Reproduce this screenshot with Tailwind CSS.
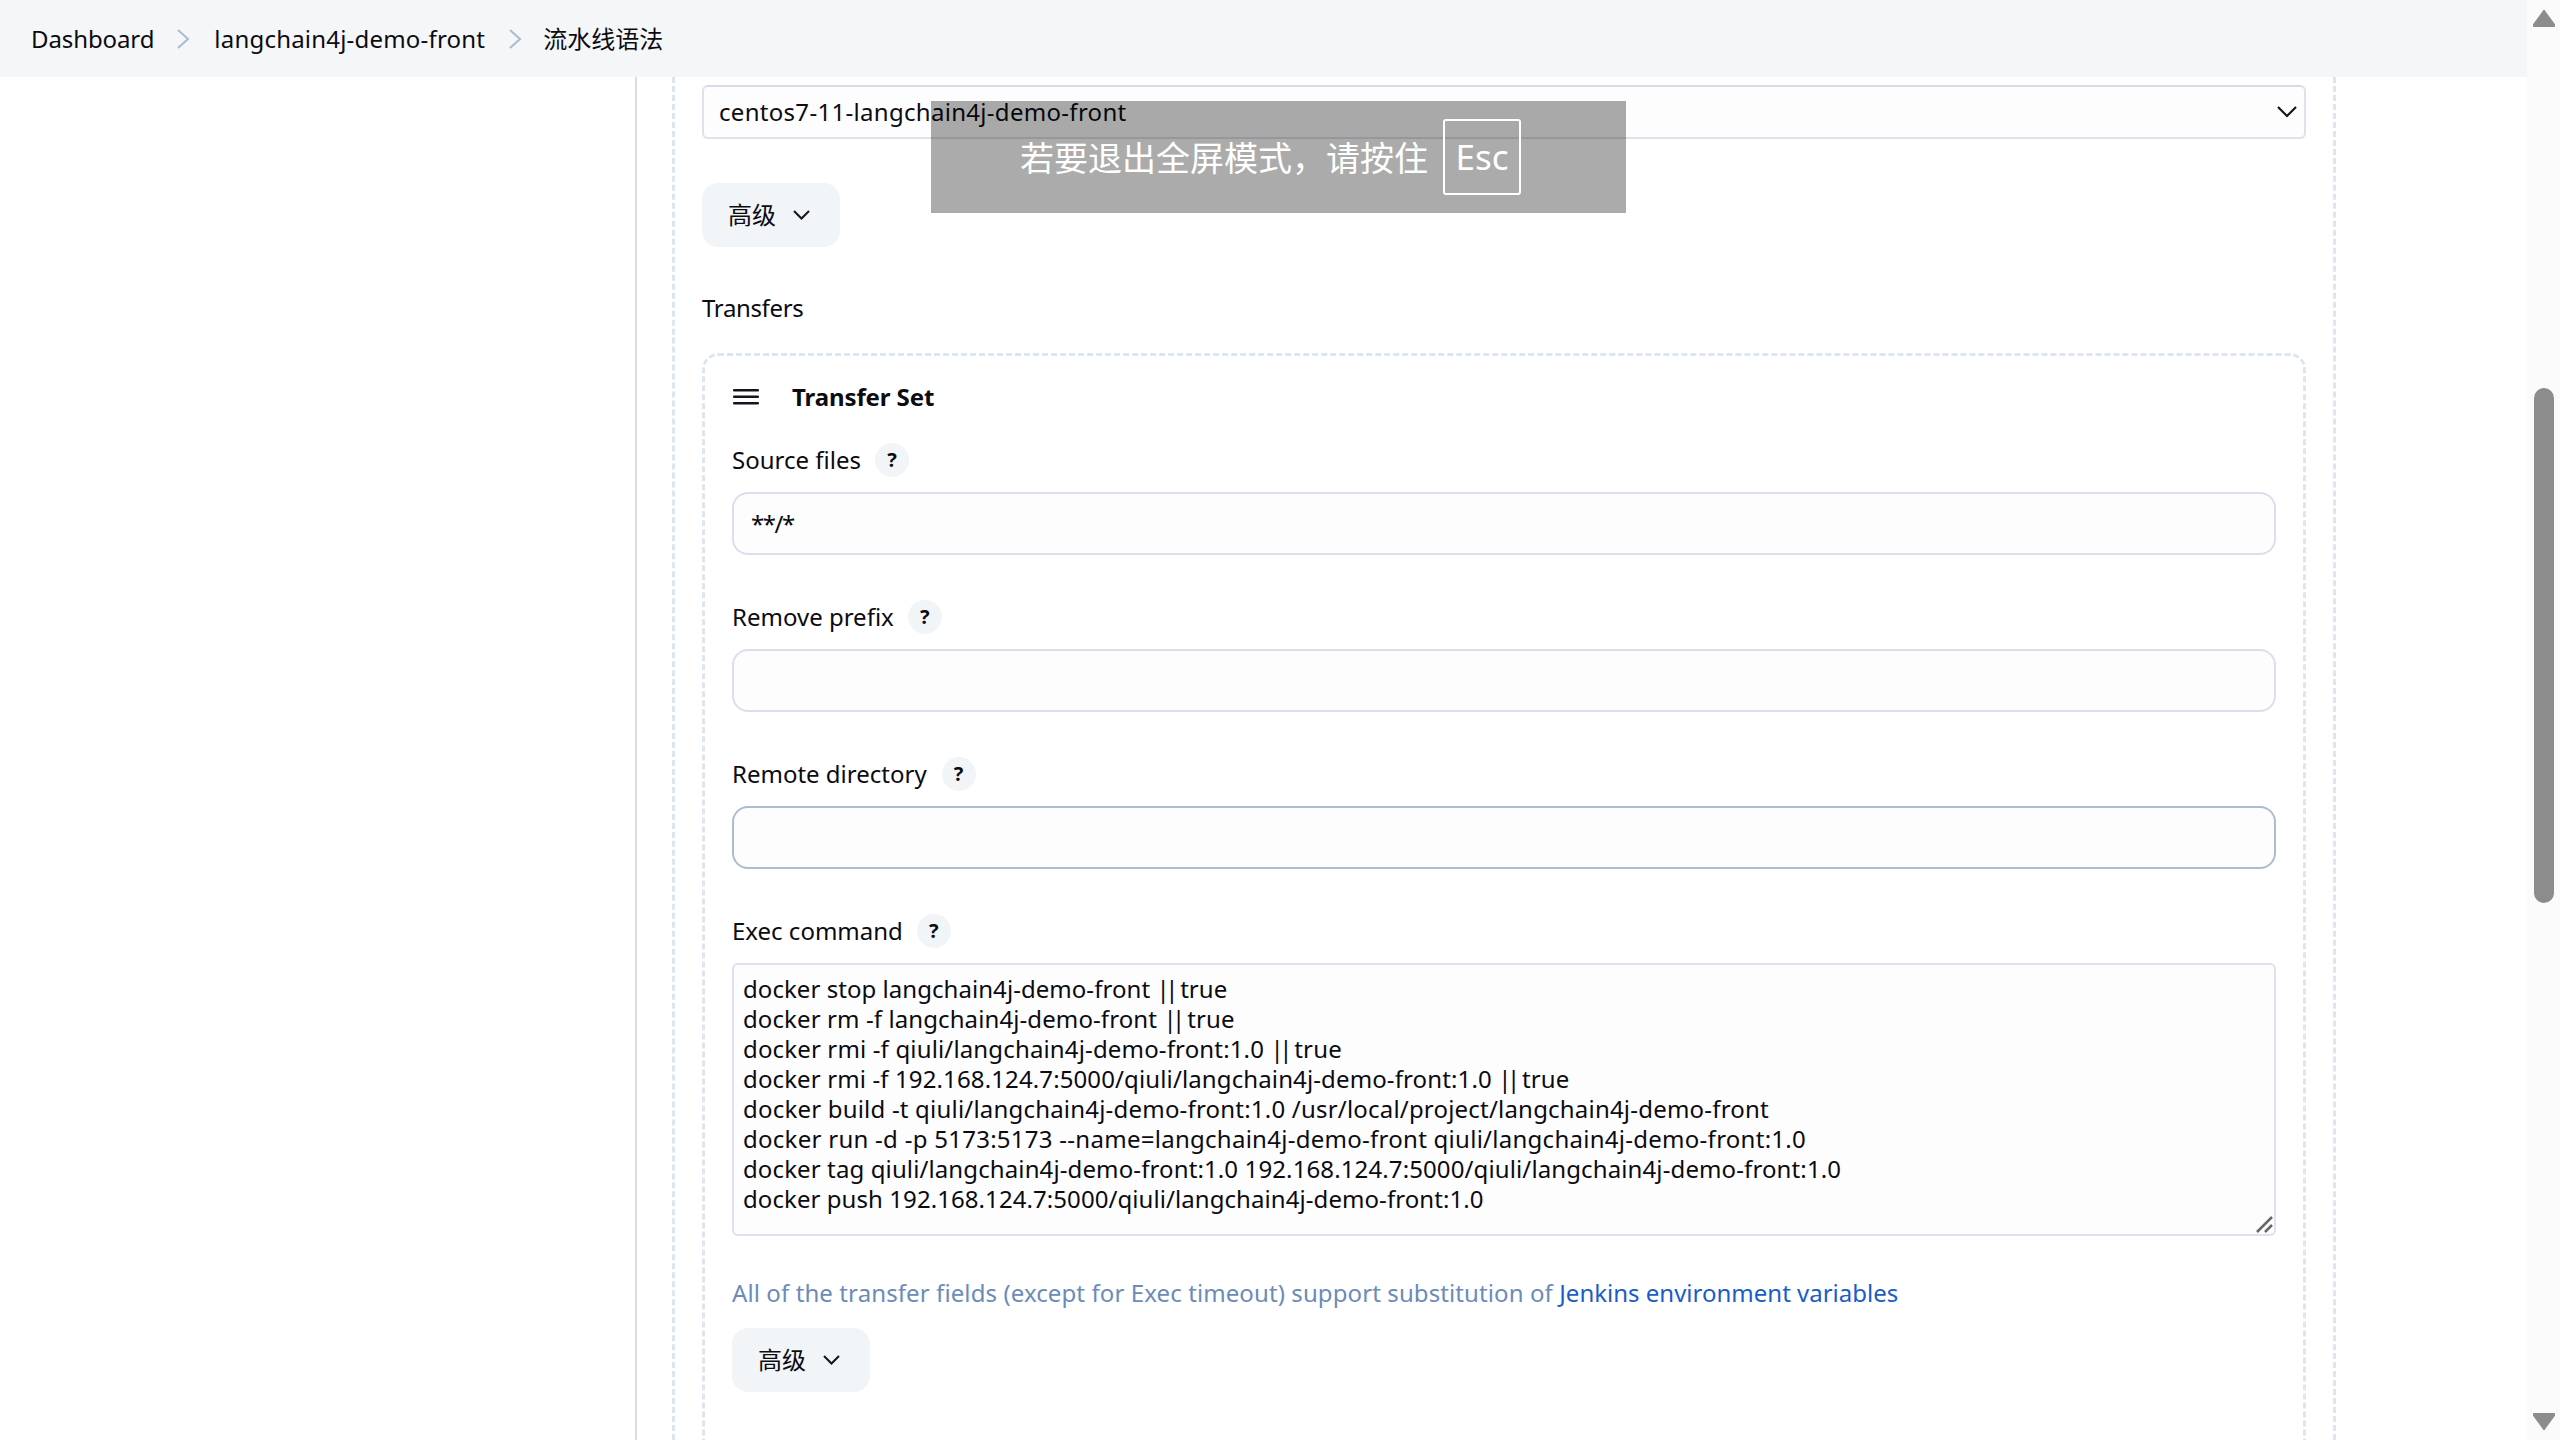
<!DOCTYPE html>
<html lang="zh-CN">
  <head>
    <meta charset="UTF-8" />
    <title>流水线语法</title>
    <script src="https://cdn.jsdelivr.net/npm/@tailwindcss/browser@4"></script>
  </head>
  <body class="relative flex h-screen overflow-hidden bg-white text-[24px] leading-[36px] text-[#0b0b10] font-['Noto_Sans','Noto_Sans_CJK_SC',sans-serif]">
    <!-- page -->
    <div class="flex h-screen min-w-0 flex-1 flex-col">
      <!-- breadcrumb bar -->
      <nav class="flex h-[77px] shrink-0 items-center bg-[#f5f6f8] pl-[31px]">
        <span class="tracking-[-0.1px]">Dashboard</span>
        <svg class="ml-[23px] mr-[25px] h-[20px] w-[12px]" viewBox="0 0 12 20" fill="none" stroke="#a9bbd6" stroke-width="2"><path d="M1 1l10 9-10 9" /></svg>
        <span class="tracking-[0.2px]">langchain4j-demo-front</span>
        <svg class="ml-[24px] mr-[22px] h-[20px] w-[12px]" viewBox="0 0 12 20" fill="none" stroke="#a9bbd6" stroke-width="2"><path d="M1 1l10 9-10 9" /></svg>
        <span>流水线语法</span>
      </nav>

      <div class="flex min-h-0 flex-1">
        <!-- sidebar -->
        <aside class="w-[637px] shrink-0 border-r-2 border-[#d8dde8]"></aside>

        <!-- publish section -->
        <main class="ml-[35px] w-[1664px] shrink-0 border-x-[3px] border-dashed border-[#dde5ee] px-[27px] pt-[8px]">
          <div class="flex h-[54px] items-center justify-between rounded-[6px] border-2 border-[#dfe2ec] border-t-[#d8dbe7] bg-[#fdfdfe] pl-[15px] pr-[7px]">
            <span class="tracking-[0.3px]">centos7-11-langchain4j-demo-front</span>
            <svg class="h-[12px] w-[20px]" viewBox="0 0 20 12" fill="none" stroke="#14141f" stroke-width="2.2"><path d="M1 1l9 9 9-9" /></svg>
          </div>

          <button class="mt-[44px] flex h-[64px] items-center rounded-[16px] bg-[#f2f5f8] pl-[26px] pr-[30px]">
            高级
            <svg class="ml-[17px] h-[10px] w-[17px]" viewBox="0 0 17 10" fill="none" stroke="#14141f" stroke-width="2"><path d="M1 1l7.500 7.500L16 1" /></svg>
          </button>

          <div class="mt-[43px] tracking-[-0.35px]">Transfers</div>

          <!-- transfer set -->
          <section class="mt-[27px] h-[1200px] rounded-[16px] border-[3px] border-dashed border-[#dde5ee] px-[27px] pt-[23px]">
            <div class="flex h-9 items-center font-bold">
              <svg class="ml-[1px] h-[16px] w-[26px]" viewBox="0 0 26 16" fill="#14141f"><rect y="0" width="26" height="2.500" rx="1" /><rect y="6.500" width="26" height="2.500" rx="1" /><rect y="13" width="26" height="2.500" rx="1" /></svg>
              <span class="ml-[33px] tracking-[-0.1px]">Transfer Set</span>
            </div>

            <div class="mt-[27px] flex h-9 items-center">
              Source files
              <span class="ml-[14px] flex h-[34px] w-[34px] items-center justify-center rounded-full bg-[#f2f5f8] text-[20px] font-bold">?</span>
            </div>
            <input value="**/*" class="mt-[14px] block h-[63px] w-full rounded-[16px] border-2 border-[#dcdfea] bg-[#fdfdfe] px-[17px] tracking-[-1.5px] outline-none" />

            <div class="mt-[44px] flex h-9 items-center">
              Remove prefix
              <span class="ml-[14px] flex h-[34px] w-[34px] items-center justify-center rounded-full bg-[#f2f5f8] text-[20px] font-bold">?</span>
            </div>
            <input class="mt-[14px] block h-[63px] w-full rounded-[16px] border-2 border-[#dcdfea] bg-[#fdfdfe] px-[17px] outline-none" />

            <div class="mt-[44px] flex h-9 items-center">
              Remote directory
              <span class="ml-[15px] flex h-[34px] w-[34px] items-center justify-center rounded-full bg-[#f2f5f8] text-[20px] font-bold">?</span>
            </div>
            <input class="mt-[14px] block h-[63px] w-full rounded-[16px] border-2 border-[#aebbd5] bg-[#fdfdfe] px-[17px] outline-none" />

            <div class="mt-[44px] flex h-9 items-center">
              Exec command
              <span class="ml-[14px] flex h-[34px] w-[34px] items-center justify-center rounded-full bg-[#f2f5f8] text-[20px] font-bold">?</span>
            </div>
            <!-- exec command box, resize handle drawn by hand -->
            <div class="relative mt-[14px] h-[273px] w-full whitespace-nowrap rounded-[6px] border-2 border-[#dfe2ec] bg-[#fdfdfe] px-[9px] py-[9px] leading-[30px]">
              <div class="tracking-[0.05px]">docker stop langchain4j-demo-front <span class="tracking-[-4.500px]">||</span> true</div>
              <div class="tracking-[0.1px]">docker rm -f langchain4j-demo-front <span class="tracking-[-4.500px]">||</span> true</div>
              <div class="tracking-[0.15px]">docker rmi -f qiuli/langchain4j-demo-front:1.0 <span class="tracking-[-4.500px]">||</span> true</div>
              <div class="tracking-[0.12px]">docker rmi -f 192.168.124.7:5000/qiuli/langchain4j-demo-front:1.0 <span class="tracking-[-4.500px]">||</span> true</div>
              <div class="tracking-[0.2px]">docker build -t qiuli/langchain4j-demo-front:1.0 /usr/local/project/langchain4j-demo-front</div>
              <div class="tracking-[0.27px]">docker run -d -p 5173:5173 --name=langchain4j-demo-front qiuli/langchain4j-demo-front:1.0</div>
              <div class="tracking-[0.115px]">docker tag qiuli/langchain4j-demo-front:1.0 192.168.124.7:5000/qiuli/langchain4j-demo-front:1.0</div>
              <div class="tracking-[0.07px]">docker push 192.168.124.7:5000/qiuli/langchain4j-demo-front:1.0</div>
              <svg class="absolute bottom-[1px] right-[1px] h-[17px] w-[17px]" viewBox="0 0 17 17" fill="none" stroke="#666" stroke-width="2.500"><path d="M1 16L16 1M9 16l7-7" /></svg>
            </div>

            <p class="mt-[39px] tracking-[0.1px] text-[#6b8bb8]">
              All of the transfer fields (except for Exec timeout) support substitution of
              <a class="tracking-normal text-[#1a5cc8]">Jenkins environment variables</a>
            </p>

            <button class="mt-[17px] flex h-[64px] items-center rounded-[16px] bg-[#f2f5f8] pl-[26px] pr-[30px]">
              高级
              <svg class="ml-[17px] h-[10px] w-[17px]" viewBox="0 0 17 10" fill="none" stroke="#14141f" stroke-width="2"><path d="M1 1l7.500 7.500L16 1" /></svg>
            </button>
          </section>
        </main>
      </div>
    </div>

    <!-- scrollbar -->
    <div class="flex h-screen w-[33px] shrink-0 flex-col items-center bg-[#fbfbfb] pt-[10px]">
      <svg class="h-[17px] w-[22px] shrink-0" viewBox="0 0 22 17" fill="#8c8c8c"><path d="M11 0 L22 15 Q22 17 20 17 L2 17 Q0 17 0 15 Z" stroke="#8c8c8c" stroke-linejoin="round" /></svg>
      <div class="mt-[361px] h-[515px] w-[20px] shrink-0 rounded-full bg-[#8c8c8c]"></div>
      <svg class="mt-[510px] h-[17px] w-[22px] shrink-0" viewBox="0 0 22 17" fill="#8c8c8c"><path d="M11 17 L22 2 Q22 0 20 0 L2 0 Q0 0 0 2 Z" stroke="#8c8c8c" stroke-linejoin="round" /></svg>
    </div>

    <!-- fullscreen notice -->
    <div class="absolute left-[931px] top-[101px] flex h-[112px] w-[695px] items-center justify-center bg-black/[.33] pr-[16px] text-[34px] text-white">
      <span class="mt-[2px]">若要退出全屏模式，请按住</span>
      <span class="ml-[15px] flex h-[76px] w-[78px] items-center justify-center rounded-[3px] border-2 border-white text-[35px]">Esc</span>
    </div>
  </body>
</html>
